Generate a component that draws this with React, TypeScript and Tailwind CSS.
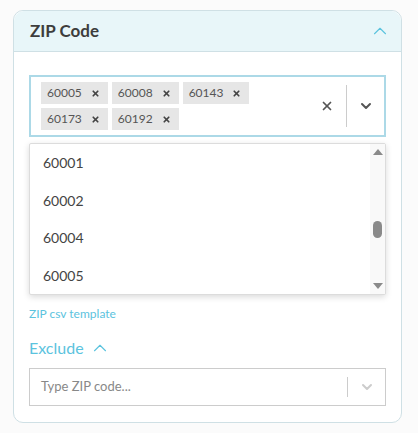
import { ChevronUp, ChevronDown, X } from 'lucide-react';

const SELECTED = ['60005', '60008', '60143', '60173', '60192'];
const OPTIONS = ['60001', '60002', '60004', '60005'];

function Chip({ label }: { label: string }) {
  return (
    <div className="flex h-[22px] items-center gap-[9px] bg-[#e6e6e6] pl-[6px] pr-[8px] text-[12px] text-[#555]">
      <span>{label}</span>
      <X className="h-[9px] w-[9px] text-[#444]" strokeWidth={4.5} />
    </div>
  );
}

export default function App() {
  return (
    <div
      className="min-h-screen bg-[#fbfbfb] pl-[13px] pr-[16px] pt-[10px]"
      style={{ fontFamily: 'Lato, "Noto Sans", sans-serif' }}
    >
      <div className="rounded-[10px] border border-[#cfe0e5] bg-white">
        {/* Header */}
        <div className="flex h-[41px] items-center justify-between rounded-t-[10px] border-b border-[#cfe0e5] bg-[#e8f6f9] pl-[16px] pr-[10px]">
          <h2 className="text-[17px] font-bold text-[#3d3d3d]">ZIP Code</h2>
          <ChevronUp className="h-[22px] w-[22px] text-[#5bc3de]" strokeWidth={1.2} />
        </div>

        <div className="px-[15px] pb-[16px] pt-[23px]">
          {/* Multi select */}
          <div className="flex h-[62px] items-center border-2 border-[#acd9e7] pl-[10px]">
            <div className="flex flex-1 flex-wrap gap-[4px] pr-2">
              {SELECTED.map((s) => (
                <Chip key={s} label={s} />
              ))}
            </div>
            <X className="mr-[12px] h-[14px] w-[14px] text-[#555]" strokeWidth={3} />
            <div className="h-[42px] w-px bg-[#cccccc]" />
            <div className="flex w-[37px] items-center justify-center">
              <ChevronDown className="h-[16px] w-[16px] text-[#555]" strokeWidth={3} />
            </div>
          </div>

          {/* Dropdown menu */}
          <div className="mt-[6px] flex h-[152px] rounded-[2px] border border-[#dcdcdc] bg-white shadow-[0_2px_6px_rgba(0,0,0,0.15)]">
            <div className="flex flex-1 flex-col">
              {OPTIONS.map((o) => (
                <div key={o} className="flex h-[38px] items-center pl-[13px] text-[14px] text-[#444]">
                  {o}
                </div>
              ))}
            </div>
            <div className="relative w-[15px] bg-[#f9f9f9]">
              <div className="absolute left-1/2 top-[5px] h-0 w-0 -translate-x-1/2 border-x-[5px] border-b-[6px] border-x-transparent border-b-[#8a8a8a]" />
              <div className="absolute left-[3px] top-[77px] h-[17px] w-[9px] rounded-full bg-[#8a8a8a]" />
              <div className="absolute bottom-[5px] left-1/2 h-0 w-0 -translate-x-1/2 border-x-[5px] border-t-[6px] border-x-transparent border-t-[#8a8a8a]" />
            </div>
          </div>

          <div className="mt-[10px] text-[12px] text-[#5bc3de]">ZIP csv template</div>

          <div className="mt-[13px] flex items-center gap-[5px] text-[16px] text-[#5bc3de]">
            <span>Exclude</span>
            <ChevronUp className="h-[22px] w-[22px]" strokeWidth={1.2} />
          </div>

          <div className="mt-[8px] flex h-[38px] items-center border border-[#cccccc] pl-[11px]">
            <span className="flex-1 text-[13px] text-[#888]">Type ZIP code...</span>
            <div className="h-[20px] w-px bg-[#cccccc]" />
            <div className="flex w-[37px] items-center justify-center">
              <ChevronDown className="h-[16px] w-[16px] text-[#cccccc]" strokeWidth={3} />
            </div>
          </div>
        </div>
      </div>
    </div>
  );
}
